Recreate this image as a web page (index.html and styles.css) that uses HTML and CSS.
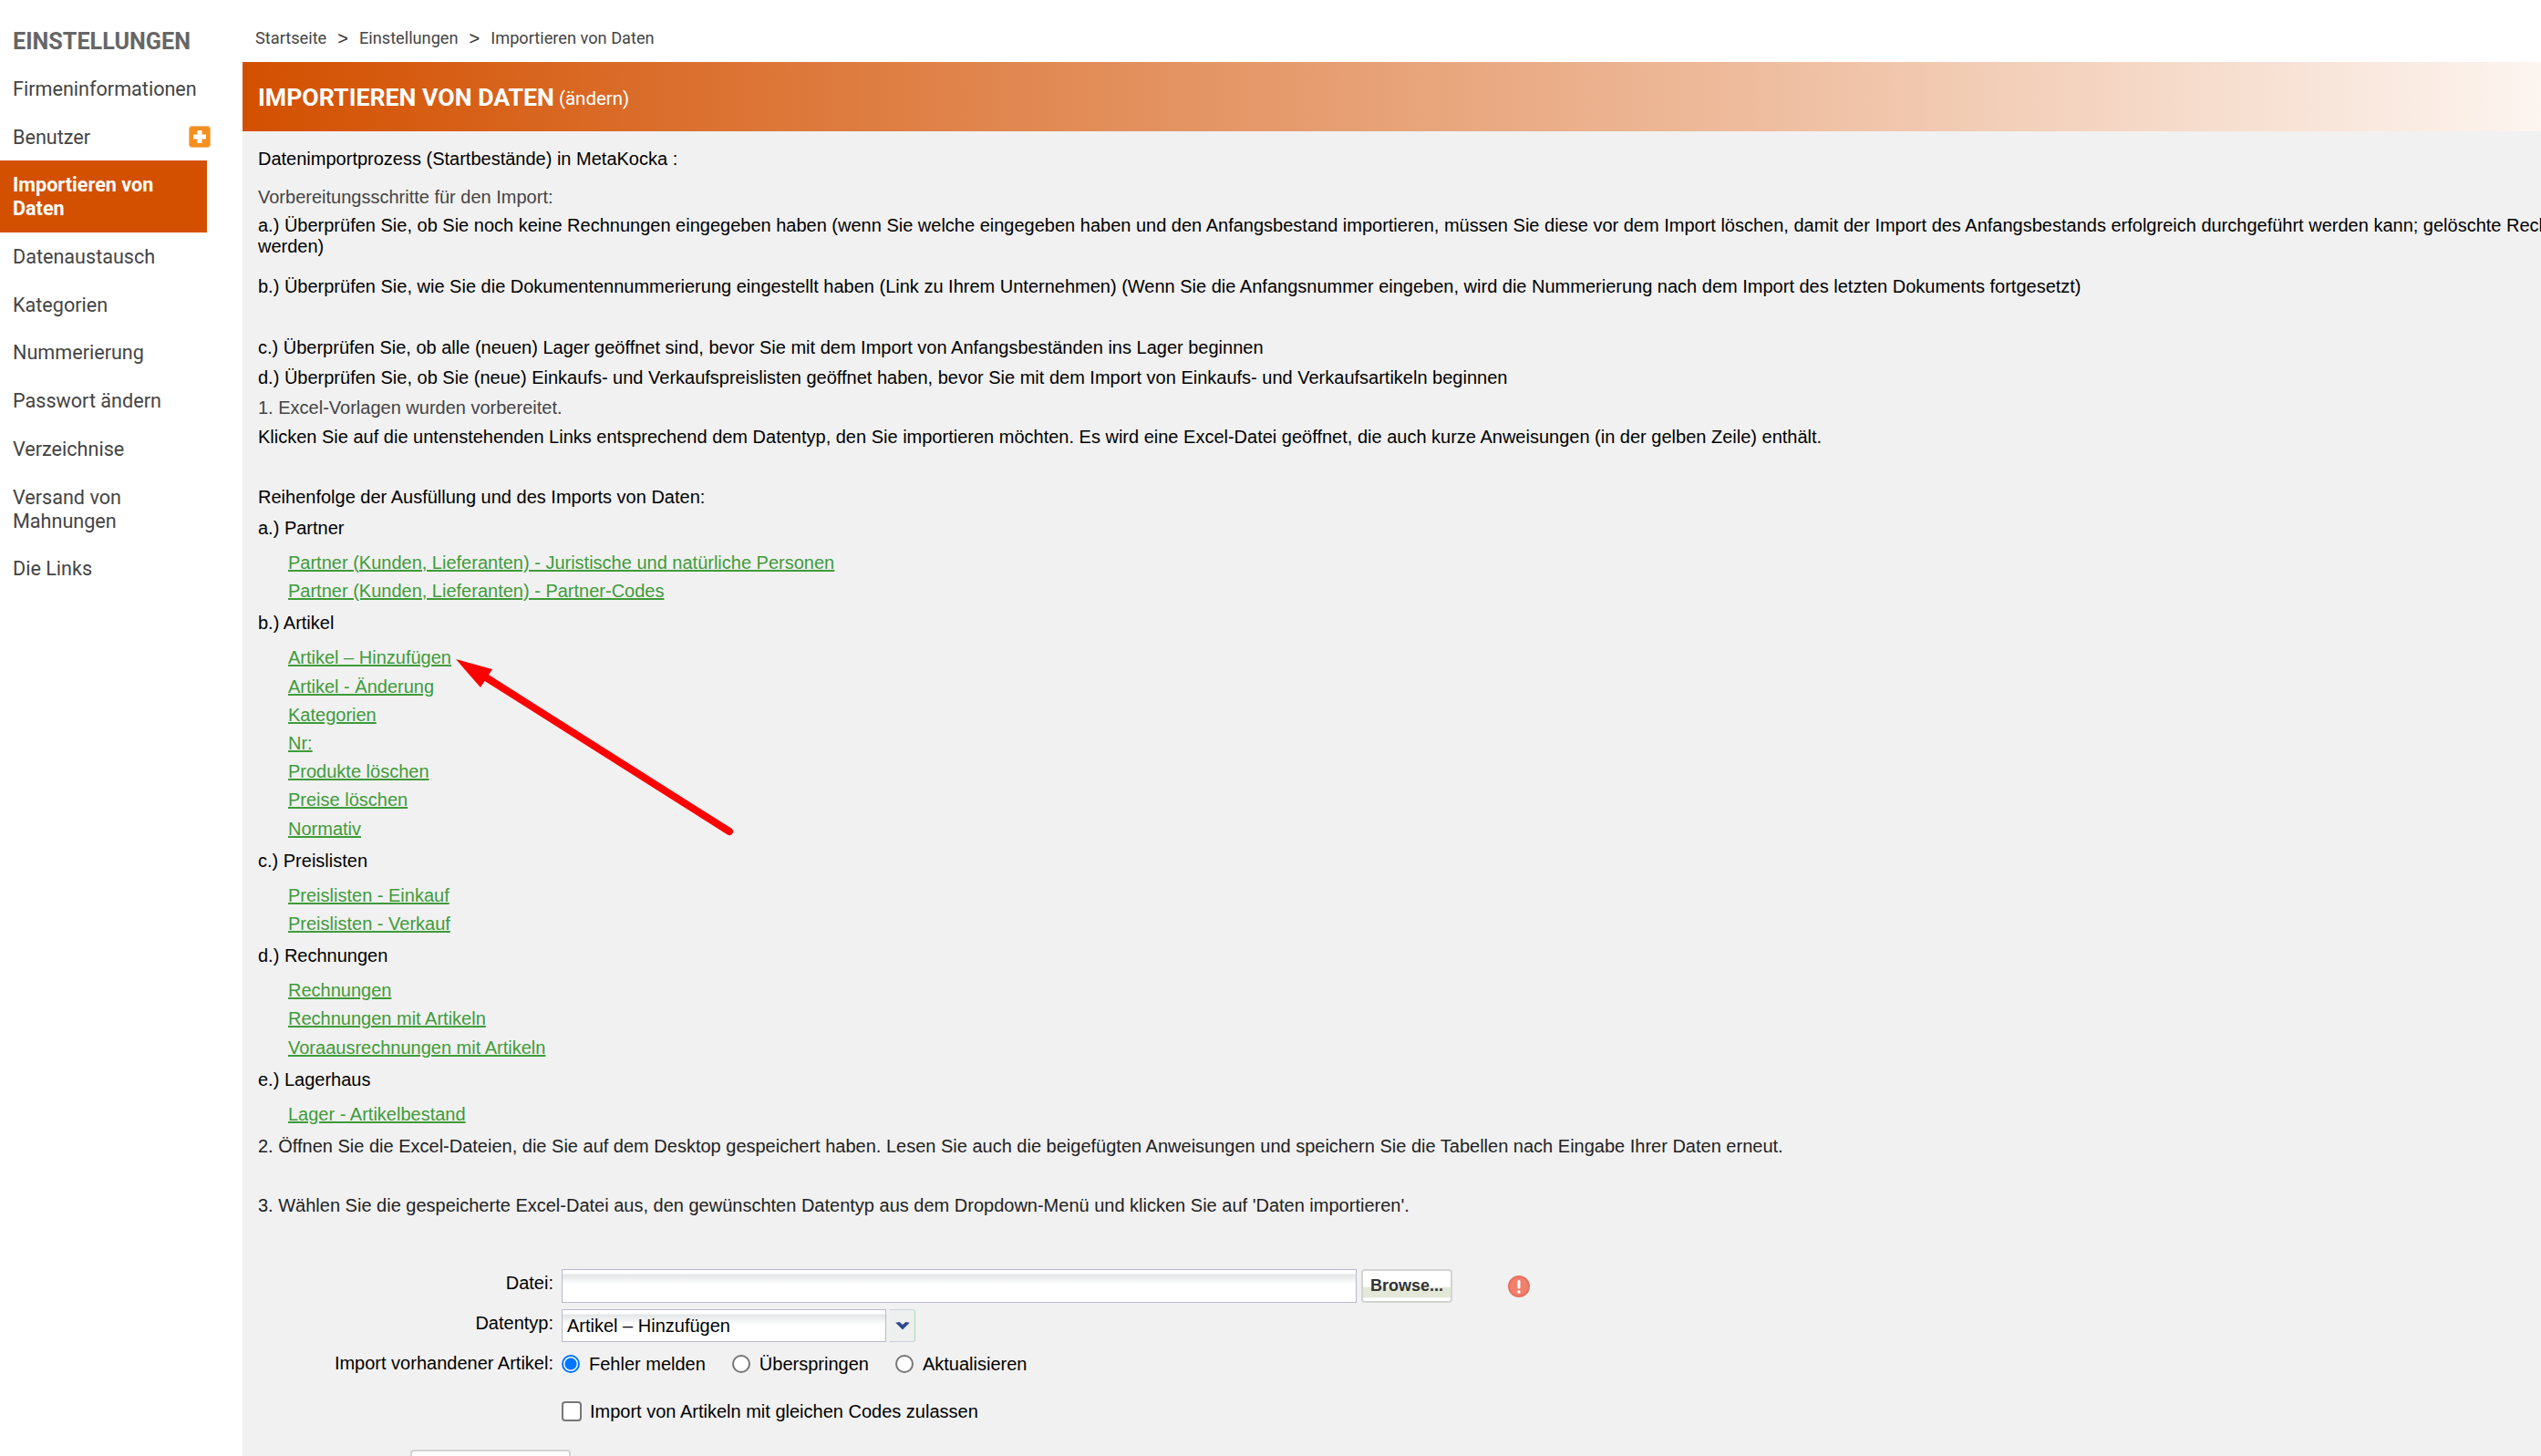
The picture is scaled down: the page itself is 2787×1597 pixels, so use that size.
FILE: index.html
```html
<!DOCTYPE html>
<html lang="de">
<head>
<meta charset="utf-8">
<title>Importieren von Daten</title>
<link rel="stylesheet" href="styles.css">
</head>
<body>
<div class="shell">
  <aside class="sidebar">
    <h2 class="side-title">EINSTELLUNGEN</h2>
    <nav class="side-nav">
      <a class="side-item">Firmeninformationen</a>
      <a class="side-item">Benutzer
        <svg class="plus" viewBox="0 0 24 24" aria-hidden="true"><rect x="0.5" y="0.5" width="23" height="23" rx="3" fill="#f38f1f" stroke="#f6b878"/><path d="M12 5v14M5 12h14" stroke="#fff" stroke-width="5"/></svg>
      </a>
      <a class="side-item active">Importieren von Daten</a>
      <a class="side-item">Datenaustausch</a>
      <a class="side-item">Kategorien</a>
      <a class="side-item">Nummerierung</a>
      <a class="side-item">Passwort ändern</a>
      <a class="side-item">Verzeichnise</a>
      <a class="side-item">Versand von Mahnungen</a>
      <a class="side-item">Die Links</a>
    </nav>
  </aside>
  <main class="main">
    <div class="crumbs"><span>Startseite</span><b>&gt;</b><span>Einstellungen</span><b>&gt;</b><span>Importieren von Daten</span></div>
    <header class="banner"><h1>IMPORTIEREN VON DATEN</h1><small>(ändern)</small></header>
    <section class="content">
      <svg class="arrow" viewBox="0 0 320 210" aria-hidden="true">
        <path d="M10 10 L50 21 L37 41 Z" fill="#f00"/>
        <path d="M43 30 L310 199" stroke="#f00" stroke-width="8" stroke-linecap="round" fill="none"/>
      </svg>
      <p class="m19">Datenimportprozess (Startbestände) in MetaKocka :</p>
      <p class="m8 muted">Vorbereitungsschritte für den Import:</p>
      <p class="m21">a.) Überprüfen Sie, ob Sie noch keine Rechnungen eingegeben haben (wenn Sie welche eingegeben haben und den Anfangsbestand importieren, müssen Sie diese vor dem Import löschen, damit der Import des Anfangsbestands erfolgreich durchgeführt werden kann; gelöschte Rechnungen werden)</p>
      <p class="m44">b.) Überprüfen Sie, wie Sie die Dokumentennummerierung eingestellt haben (Link zu Ihrem Unternehmen) (Wenn Sie die Anfangsnummer eingeben, wird die Nummerierung nach dem Import des letzten Dokuments fortgesetzt)</p>
      <p class="m10">c.) Überprüfen Sie, ob alle (neuen) Lager geöffnet sind, bevor Sie mit dem Import von Anfangsbeständen ins Lager beginnen</p>
      <p class="m10">d.) Überprüfen Sie, ob Sie (neue) Einkaufs- und Verkaufspreislisten geöffnet haben, bevor Sie mit dem Import von Einkaufs- und Verkaufsartikeln beginnen</p>
      <p class="m9 muted">1. Excel-Vorlagen wurden vorbereitet.</p>
      <p class="m43">Klicken Sie auf die untenstehenden Links entsprechend dem Datentyp, den Sie importieren möchten. Es wird eine Excel-Datei geöffnet, die auch kurze Anweisungen (in der gelben Zeile) enthält.</p>
      <p class="m11">Reihenfolge der Ausfüllung und des Imports von Daten:</p>

      <p class="group">a.) Partner</p>
      <ul class="links">
        <li><a href="#">Partner (Kunden, Lieferanten) - Juristische und natürliche Personen</a></li>
        <li><a href="#">Partner (Kunden, Lieferanten) - Partner-Codes</a></li>
      </ul>
      <p class="group">b.) Artikel</p>
      <ul class="links">
        <li><a href="#">Artikel – Hinzufügen</a></li>
        <li><a href="#">Artikel - Änderung</a></li>
        <li><a href="#">Kategorien</a></li>
        <li><a href="#">Nr:</a></li>
        <li><a href="#">Produkte löschen</a></li>
        <li><a href="#">Preise löschen</a></li>
        <li><a href="#">Normativ</a></li>
      </ul>
      <p class="group">c.) Preislisten</p>
      <ul class="links">
        <li><a href="#">Preislisten - Einkauf</a></li>
        <li><a href="#">Preislisten - Verkauf</a></li>
      </ul>
      <p class="group">d.) Rechnungen</p>
      <ul class="links">
        <li><a href="#">Rechnungen</a></li>
        <li><a href="#">Rechnungen mit Artikeln</a></li>
        <li><a href="#">Voraausrechnungen mit Artikeln</a></li>
      </ul>
      <p class="group">e.) Lagerhaus</p>
      <ul class="links">
        <li><a href="#">Lager - Artikelbestand</a></li>
      </ul>
      <p class="m42 dark">2. Öffnen Sie die Excel-Dateien, die Sie auf dem Desktop gespeichert haben. Lesen Sie auch die beigefügten Anweisungen und speichern Sie die Tabellen nach Eingabe Ihrer Daten erneut.</p>
      <p class="m58 dark">3. Wählen Sie die gespeicherte Excel-Datei aus, den gewünschten Datentyp aus dem Dropdown-Menü und klicken Sie auf 'Daten importieren'.</p>

      <form class="form">
        <label class="f-label">Datei:</label>
        <div class="f-file">
          <div class="field file-field"></div>
          <button type="button" class="browse">Browse...</button>
          <svg class="err" viewBox="0 0 24 24" aria-hidden="true"><circle cx="12" cy="12" r="11" fill="#f2806e" stroke="#e4735f" stroke-width="2"/><rect x="10.5" y="5" width="3" height="9.5" rx="1.5" fill="#fff"/><circle cx="12" cy="18" r="1.7" fill="#fff"/></svg>
        </div>
        <label class="f-label">Datentyp:</label>
        <div class="f-select">
          <div class="field select-field">Artikel – Hinzufügen</div>
          <div class="select-btn"><svg viewBox="0 0 14 9" aria-hidden="true"><path d="M0 1.5 L4 1 L7 3.5 L10 1 L14 1.5 L7 8.5 Z" fill="#2f4a8c"/></svg></div>
        </div>
        <label class="f-label f-label-radio">Import vorhandener Artikel:</label>
        <div class="f-radios">
          <label class="opt"><input type="radio" name="ex" checked>Fehler melden</label>
          <label class="opt"><input type="radio" name="ex">Überspringen</label>
          <label class="opt"><input type="radio" name="ex">Aktualisieren</label>
        </div>
        <div class="f-check">
          <label class="opt"><input type="checkbox">Import von Artikeln mit gleichen Codes zulassen</label>
        </div>
        <div class="f-submit"><button type="button" class="submit">Daten importieren</button></div>
      </form>
    </section>
  </main>
</div>
</body>
</html>
```

FILE: styles.css
```css
* { box-sizing: border-box; }
html, body { margin: 0; height: 100%; overflow: hidden; background: #fff; }
body { font-family: "Liberation Sans", Arial, sans-serif; font-size: 20px; color: #000; }

.shell { display: flex; width: 2946px; min-height: 1800px; }

.sidebar { width: 266px; flex: none; background: #fff; font-family: Roboto, sans-serif; font-size: 21.6px; line-height: 26px; color: #444; }
.side-title { margin: 0; padding: 33px 0 0 14px; font-size: 25.2px; line-height: 26px; font-weight: 700; color: #666; }
.side-nav { display: flex; flex-direction: column; width: 227px; margin-top: 12px; }
.side-item { display: block; position: relative; padding: 14px 14px 12.7px; }
.side-item.active { background: #d35000; color: #fff; font-weight: 700; }
.plus { position: absolute; right: -4px; top: 14px; width: 24px; height: 24px; }

.main { flex: 1; min-width: 0; display: flex; flex-direction: column; }
.crumbs { height: 68px; padding: 30px 0 0 14px; font-family: Roboto, sans-serif; font-size: 18.2px; line-height: 24px; color: #444; display: flex; gap: 12px; }
.crumbs b { font: 400 20px/24px "Liberation Sans", Arial, sans-serif; color: #333; }
.banner { height: 76px; padding: 2px 17px 0; display: flex; align-items: center; gap: 5px; color: #fff; background: linear-gradient(to right, #d35000, #fff); font-family: Roboto, sans-serif; }
.banner h1 { margin: 0; font-size: 26.7px; font-weight: 700; }
.banner small { font-size: 20.5px; padding-top: 2px; }

.content { position: relative; flex: 1; background: #f1f1f1; padding: 19px 17px 0; line-height: 23px; }
.content p { margin: 0; }
.content .m8 { margin-bottom: 8px; }
.content .m9 { margin-bottom: 9px; }
.content .m10 { margin-bottom: 10px; }
.content .m11 { margin-bottom: 11px; }
.content .m19 { margin-bottom: 19px; }
.content .m21 { margin-bottom: 21px; }
.content .m42 { margin-bottom: 42px; }
.content .m43 { margin-bottom: 43px; }
.content .m44 { margin-bottom: 44px; }
.content .m58 { margin-bottom: 58px; }
.muted { color: #444; }
.dark { color: #222; }
.content .group { margin-bottom: 11px; }

.links { list-style: none; margin: 0 0 8px; padding: 0 0 0 33px; line-height: 31.2px; }
.links a { color: #3f9b3a; text-decoration: underline; text-decoration-thickness: 2px; }

.arrow { position: absolute; left: 224px; top: 569px; width: 320px; height: 210px; }

.form { display: grid; grid-template-columns: 324px 1fr; column-gap: 9px; }
.f-label { text-align: right; line-height: 30px; }
.f-file { display: flex; gap: 5px; align-items: center; height: 37px; margin-bottom: 7px; }
.field { border: 1px solid #b9b9cd; background: linear-gradient(to bottom, #fff 0, #fff 4px, #e2e5e6 5px, #fff 16px); }
.file-field { width: 872px; height: 37px; }
.browse { width: 100px; height: 37px; padding: 0; border: 2px solid #d2d4d2; border-radius: 4px; background: linear-gradient(to bottom, #fff 0, #fff 52%, #e3e8d9 56%, #e3e8d9 88%, #fff 90%); font: 700 18px "Liberation Sans", Arial, sans-serif; color: #333; }
.err { width: 24px; height: 24px; margin-left: 56px; }
.f-select { display: flex; gap: 4px; height: 36px; margin-bottom: 9px; }
.select-field { width: 356px; height: 36px; padding-left: 5px; line-height: 35px; }
.select-btn { width: 28px; height: 36px; display: flex; align-items: center; justify-content: center; background: #eef0f0; border: 1px solid #cfd0dc; border-left: none; border-right-color: #a5dab8; border-radius: 0 3px 3px 0; }
.select-btn svg { width: 16px; height: 10px; }
.f-label-radio { line-height: 28px; }
.f-radios { display: flex; gap: 29px; height: 30px; align-items: center; }
.opt { display: flex; align-items: center; gap: 10px; }
.opt input { margin: 0; appearance: none; background: #fff; border: 2px solid #767676; }
.opt input[type=radio] { width: 20px; height: 20px; border-radius: 50%; }
.opt input[type=radio]:checked { border-color: #0075ff; background: radial-gradient(circle, #0075ff 0, #0075ff 6px, #fff 7px); }
.opt input[type=checkbox] { width: 22px; height: 22px; border-radius: 4px; }
.f-check { grid-column: 2; margin-top: 25px; height: 24px; display: flex; align-items: center; }
.f-check .opt { gap: 9px; }
.f-submit { grid-column: 1 / 3; margin: 30px 0 0 167px; }
.submit { width: 176px; height: 40px; background: #fff; border: 2px solid #d2d4d2; border-radius: 4px; font: 700 18px "Liberation Sans", Arial, sans-serif; color: #333; }
```
